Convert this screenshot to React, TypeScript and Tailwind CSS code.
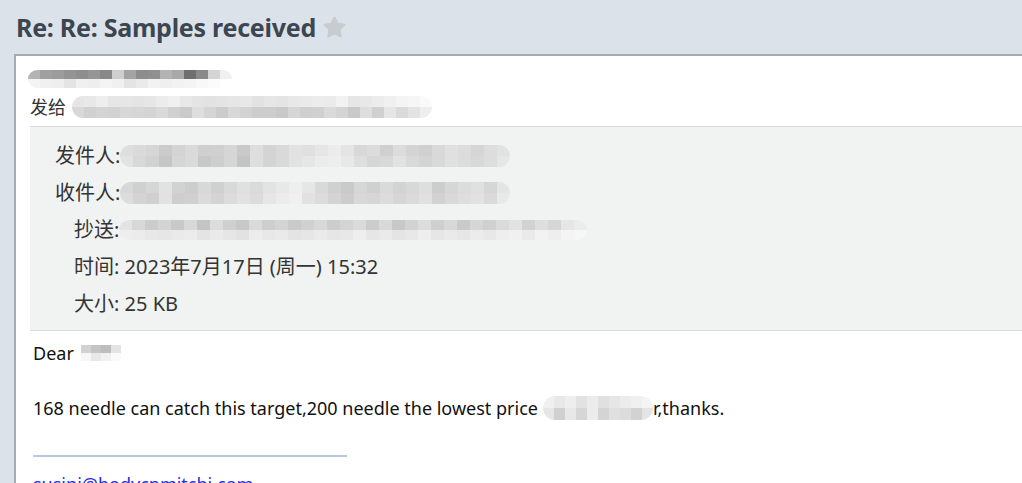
import { Star } from "lucide-react"

// pixelated (redacted) strip; each string is one row of shades, left to right
function Blur({ rows, cell = 12, h = 16, className = "" }: { rows: string[]; cell?: number; h?: number; className?: string }) {
  return (
    <span className={"inline-flex flex-col overflow-hidden rounded-full shrink-0 " + className}>
      {rows.map((r, j) => (
        <span key={j} className="flex">
          {r.split(" ").map((c, i) => (
            <span key={i} style={{ background: "#" + c, width: cell, height: h / rows.length }} />
          ))}
        </span>
      ))}
    </span>
  )
}

function MetaRow({ label, children, indent }: { label: string; children?: React.ReactNode; indent?: boolean }) {
  return (
    <div className={"flex items-center h-[37px] whitespace-nowrap " + (indent ? "pl-[44px]" : "pl-[25px]")}>
      <span>{label}</span>
      {children}
    </div>
  )
}

export default function App() {
  return (
    <div className="h-[483px] overflow-hidden bg-[#dce2e9] text-[#222] font-['Noto_Sans','Noto_Sans_CJK_SC',sans-serif]">
      <div className="h-[54px] flex items-center pl-4 gap-[6px]">
        <h1 className="text-[25px] leading-none font-bold text-[#3c4650] tracking-[-0.25px]">Re: Re: Samples received</h1>
        <Star className="size-[25px] text-[#c8ccd0] fill-[#c8ccd0]" strokeWidth={1} />
      </div>
      <div className="ml-[14px] h-full bg-white border-l-2 border-t-2 border-[#a4acb0]">
        <div className="flex h-[18px] mt-[14px] pl-[12px]">
          <Blur
            h={18}
            cell={12}
            rows={[
              "b4b4b4 a0a0a0 9c9c9c 949494 8e8e8e 959595 888888 cfcfcf a3a3a3 8d8d8d 909090 b3b3b3 a9a9a9 6f6f6f 8a8a8a d4d4d4 f0f0f0",
              "f4f4f4 f0f0f0 eeeeee e4e4e4 f0f0f0 eeeeee f4f4f4 f0f0f0 e4e4e4 eaeaea f2f2f2 efefef f2f2f2 f4f4f4 f8f8f8 fbfbfb ffffff",
            ]}
          />
        </div>
        <div className="flex items-center pl-[14px] mt-[6px] h-[26px] text-[18px] text-[#333]">
          <span>发给</span>
          <Blur
            className="ml-[6px]"
            h={22}
            rows={[
              "e6e6e6 e8e8e8 eeeeee e6e6e6 e6e6e6 e4e4e4 e6e6e6 ececec f0f0f0 e8e8e8 e4e4e4 e2e2e2 e4e4e4 e6e6e6 e8e8e8 e2e2e2 e6e6e6 e4e4e4 e8e8e8 eaeaea ececec ebebeb f2f2f2 e6e6e6 e8e8e8 ececec f0f0f0 f4f4f4 f6f6f6 fafafa",
              "d8d8d8 d0d0d0 d4d4d4 d2d2d2 d8d8d8 d6d6d6 d4d4d4 dadada d0d0d0 cacaca dedede d5d5d5 cccccc d8d8d8 d3d3d3 cdcdcd cdcdcd c9c9c9 d6d6d6 cfcfcf d0d0d0 dadada d4d4d4 c9c9c9 dedede d0d0d0 e6e6e6 dadada e3e3e3 eeeeee",
            ]}
          />
        </div>
        <div className="ml-[14px] mt-[6px] h-[205px] bg-[#f0f3f2] border-t border-b border-[#d6d9d8] pt-[10px] text-[#333] text-[20px]">
          <MetaRow label="发件人:">
            <Blur
              h={22}
              cell={13}
              rows={[
                "dedede dadada d6d6d6 cbcbcb d4d4d4 dadada cfcfcf d0d0d0 d6d6d6 c9c9c9 dedede d4d4d4 d9d9d9 e2e2e2 e0e0e0 e6e6e6 ececec e4e4e4 d8d8d8 dcdcdc d0d0d0 dcdcdc d4d4d4 d0d0d0 d9d9d9 e0e0e0 dcdcdc d6d6d6 dddddd e2e2e2",
                "e2e2e2 d8d8d8 d2d2d2 c6c6c6 d6d6d6 dadada c8c8c8 cecece d6d6d6 c4c4c4 dedede d4d4d4 d9d9d9 e2e2e2 e6e6e6 ececec eeeeee e8e8e8 dedede d6d6d6 d8d8d8 e2e2e2 d9d9d9 d4d4d4 d9d9d9 e0e0e0 dcdcdc d8d8d8 dddddd e6e6e6",
              ]}
            />
          </MetaRow>
          <MetaRow label="收件人:">
            <Blur
              h={22}
              cell={13}
              rows={[
                "d8d8d8 d0d0d0 d6d6d6 e2e2e2 d2d2d2 cdcdcd d8d8d8 d0d0d0 d9d9d9 e0e0e0 dadada e3e3e3 e8e8e8 eeeeee e6e6e6 d9d9d9 d0d0d0 cacaca d6d6d6 d0d0d0 dadada d3d3d3 d8d8d8 dedede cdcdcd d6d6d6 dcdcdc e0e0e0 d6d6d6 e4e4e4",
                "dcdcdc d4d4d4 d0d0d0 e2e2e2 cecece d0d0d0 dadada d4d4d4 dcdcdc e2e2e2 dcdcdc e6e6e6 ececec f0f0f0 e2e2e2 dcdcdc d4d4d4 cdcdcd d8d8d8 d6d6d6 dcdcdc d6d6d6 dadada e0e0e0 d2d2d2 d9d9d9 dedede e2e2e2 dadada e8e8e8",
              ]}
            />
          </MetaRow>
          <MetaRow label="抄送:" indent>
            <Blur
              h={20}
              cell={13}
              rows={[
                "e4e4e4 d8d8d8 cccccc d4d4d4 c9c9c9 d8d8d8 c4c4c4 dcdcdc cfcfcf c8c8c8 dadada cecece d4d4d4 cacaca d0d0d0 d8d8d8 cdcdcd d4d4d4 dadada cccccc d9d9d9 c8c8c8 d2d2d2 dcdcdc cfcfcf d8d8d8 cacaca d6d6d6 d0d0d0 dadada e2e2e2 d2d2d2 dedede d6d6d6 e6e6e6 ececec",
                "eeeeee ececec e8e8e8 e6e6e6 eaeaea ececec e4e4e4 eaeaea e6e6e6 e2e2e2 ececec e8e8e8 eaeaea e4e4e4 e6e6e6 eaeaea e6e6e6 e8e8e8 eeeeee e6e6e6 eaeaea e4e4e4 e8e8e8 eeeeee e6e6e6 eaeaea e6e6e6 ececec e8e8e8 eeeeee f0f0f0 eaeaea f2f2f2 eeeeee f4f4f4 f6f6f6",
              ]}
            />
          </MetaRow>
          <MetaRow label="时间: 2023年7月17日 (周一) 15:32" indent />
          <MetaRow label="大小: 25 KB" indent />
        </div>
        <div className="pl-[17px] pt-[11px] text-[18px] text-[#111]">
          <div className="flex items-center h-[22px]">
            <span>Dear</span>
            <Blur className="ml-[7px] rounded-none" h={16} cell={10} rows={["d2d2d2 c4c4c4 bdbdbd e4e4e4", "f6f6f6 e8e8e8 f0f0f0 fafafa"]} />
          </div>
          <div className="flex items-center h-[22px] mt-[33px] whitespace-nowrap">
            <span>168 needle can catch this target,200 needle the lowest price</span>
            <Blur
              className="ml-[5px]"
              h={24}
              cell={11}
              rows={["f0f0f0 e8e8e8 eeeeee e2e2e2 ececec e0e0e0 e6e6e6 ececec f0f0f0 f4f4f4", "e6e6e6 d0d0d0 e8e8e8 d6d6d6 ececec d4d4d4 e0e0e0 dcdcdc d2d2d2 e4e4e4"]}
            />
            <span>r,thanks.</span>
          </div>
          <div className="mt-[36px] w-[314px] border-t-2 border-[#b8c6e0]" />
          <div className="mt-[16px] text-[#2b2be0] leading-[22px]">susini@bodycpmitchi.com</div>
        </div>
      </div>
    </div>
  )
}
